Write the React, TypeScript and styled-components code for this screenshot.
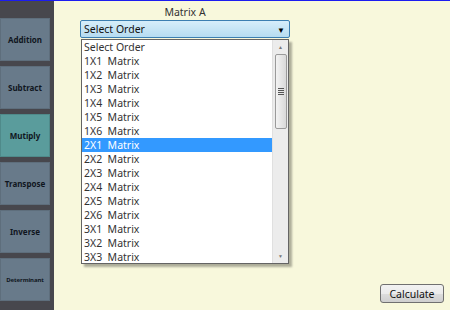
import React from "react";
import styled, { createGlobalStyle } from "styled-components";

const Global = createGlobalStyle`
  html, body { margin: 0; padding: 0; background: #f8f8dc; }
  body { font-family: "Noto Sans", "Open Sans", sans-serif; }
  #root { width: 450px; height: 310px; overflow: hidden; }
`;

const Frame = styled.div`
  width: 450px;
  height: 310px;
  display: flex;
  border-top: 1px solid #1c1cf0;
  box-sizing: border-box;
`;

const Sidebar = styled.nav`
  width: 54px;
  background: #47474d;
  display: flex;
  flex-direction: column;
  gap: 5px;
  padding-top: 17px;
  box-sizing: border-box;
`;

const NavButton = styled.div<{ $active?: boolean; $small?: boolean }>`
  width: 50px;
  height: 43px;
  box-sizing: border-box;
  background: ${(p) => (p.$active ? "#5a9c9c" : "#687a8a")};
  border: 1px solid ${(p) => (p.$active ? "#4f8a8a" : "#5e6e7c")};
  display: flex;
  align-items: center;
  justify-content: center;
  font-weight: 700;
  font-size: ${(p) => (p.$small ? "6px" : "8px")};
  color: #10161e;
  letter-spacing: ${(p) => (p.$small ? "-0.1px" : "0")};
`;

const Main = styled.main`
  flex: 1;
  position: relative;
  background: #f8f8dc;
`;

const Column = styled.div`
  margin-left: 26px;
  width: 210px;
  display: flex;
  flex-direction: column;
  align-items: center;
  position: relative;
`;

const Label = styled.div`
  font-size: 10.5px;
  color: #333;
  line-height: 14px;
  padding-top: 4px;
  height: 15px;
`;

const Combo = styled.div`
  width: 210px;
  height: 18px;
  box-sizing: border-box;
  border: 1px solid #3c7fb1;
  border-radius: 2px;
  background: linear-gradient(#d6eefa, #b6dcf1);
  display: flex;
  align-items: center;
  justify-content: space-between;
  padding: 0 4px 0 3px;
  font-size: 10.5px;
  color: #111;
`;

const Arrow = styled.span`
  font-size: 8px;
  color: #000;
`;

const Popup = styled.div`
  position: absolute;
  left: 1px;
  top: 38px;
  width: 208px;
  height: 225px;
  box-sizing: border-box;
  border: 1px solid #646464;
  background: #fff;
  display: flex;
  box-shadow: 3px 3px 2px rgba(0, 0, 0, 0.3);
  &::after {
    content: "";
    position: absolute;
    left: 0;
    right: -2px;
    bottom: -4px;
    height: 3px;
    background: linear-gradient(90deg, #a8e6a8, #49b9a4 60%, #3a9c98);
    z-index: -1;
  }
`;

const List = styled.div`
  flex: 1;
  display: flex;
  flex-direction: column;
`;

const Item = styled.div<{ $sel?: boolean }>`
  height: 14px;
  line-height: 14px;
  font-size: 10.5px;
  padding-left: 2px;
  color: ${(p) => (p.$sel ? "#fff" : "#333")};
  background: ${(p) => (p.$sel ? "#3399ff" : "transparent")};
  white-space: pre;
`;

const Scroll = styled.div`
  width: 15px;
  background: #ececec;
  border-left: 1px solid #e0e0e0;
  display: flex;
  flex-direction: column;
  align-items: center;
`;

const ScrollArrow = styled.div`
  height: 14px;
  display: flex;
  align-items: center;
  justify-content: center;
  font-size: 5px;
  color: #777;
`;

const Thumb = styled.div`
  width: 12px;
  height: 75px;
  box-sizing: border-box;
  border: 1px solid #9a9a9a;
  border-radius: 2px;
  background: linear-gradient(90deg, #f3f3f3, #d9d9d9);
  display: flex;
  flex-direction: column;
  align-items: center;
  justify-content: center;
  gap: 1px;
`;

const Grip = styled.div`
  width: 6px;
  height: 1px;
  background: #555;
`;

const Track = styled.div`
  flex: 1;
`;

const CalcButton = styled.div`
  position: absolute;
  right: 6px;
  bottom: 7px;
  width: 64px;
  height: 19px;
  box-sizing: border-box;
  border: 1px solid #707070;
  border-radius: 3px;
  background: linear-gradient(#f2f2f2 0%, #ebebeb 50%, #dddddd 51%, #cfcfcf 100%);
  display: flex;
  align-items: center;
  justify-content: center;
  font-size: 10.5px;
  color: #111;
`;

const navs = ["Addition", "Subtract", "Mutiply", "Transpose", "Inverse", "Determinant"];
const items = [
  "Select Order",
  "1X1  Matrix",
  "1X2  Matrix",
  "1X3  Matrix",
  "1X4  Matrix",
  "1X5  Matrix",
  "1X6  Matrix",
  "2X1  Matrix",
  "2X2  Matrix",
  "2X3  Matrix",
  "2X4  Matrix",
  "2X5  Matrix",
  "2X6  Matrix",
  "3X1  Matrix",
  "3X2  Matrix",
  "3X3  Matrix",
];

export default function App() {
  return (
    <>
      <Global />
      <Frame>
        <Sidebar>
          {navs.map((n) => (
            <NavButton key={n} $active={n === "Mutiply"} $small={n === "Determinant"}>
              {n}
            </NavButton>
          ))}
        </Sidebar>
        <Main>
          <Column>
            <Label>Matrix A</Label>
            <Combo>
              <span>Select Order</span>
              <Arrow>▼</Arrow>
            </Combo>
            <Popup>
              <List>
                {items.map((it, i) => (
                  <Item key={it} $sel={i === 7}>
                    {it}
                  </Item>
                ))}
              </List>
              <Scroll>
                <ScrollArrow>▲</ScrollArrow>
                <Thumb>
                  <Grip />
                  <Grip />
                  <Grip />
                  <Grip />
                </Thumb>
                <Track />
                <ScrollArrow>▼</ScrollArrow>
              </Scroll>
            </Popup>
          </Column>
          <CalcButton>Calculate</CalcButton>
        </Main>
      </Frame>
    </>
  );
}
